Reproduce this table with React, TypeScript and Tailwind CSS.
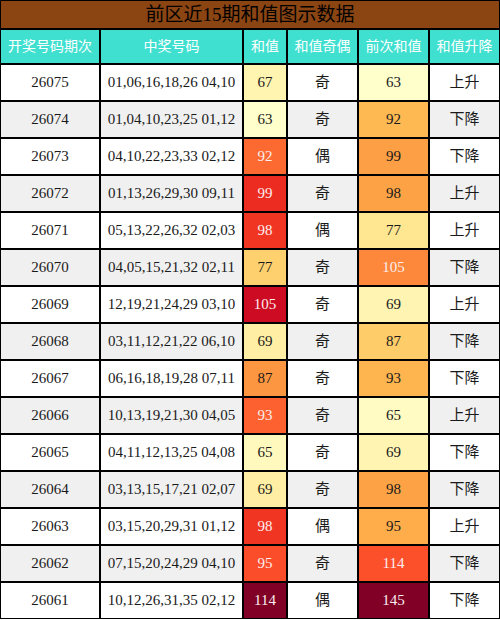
import React from "react";

const rows: [string, string, number, string, number, string][] = [
  ["26075", "01,06,16,18,26 04,10", 67, "奇", 63, "上升"],
  ["26074", "01,04,10,23,25 01,12", 63, "奇", 92, "下降"],
  ["26073", "04,10,22,23,33 02,12", 92, "偶", 99, "下降"],
  ["26072", "01,13,26,29,30 09,11", 99, "奇", 98, "上升"],
  ["26071", "05,13,22,26,32 02,03", 98, "偶", 77, "上升"],
  ["26070", "04,05,15,21,32 02,11", 77, "奇", 105, "下降"],
  ["26069", "12,19,21,24,29 03,10", 105, "奇", 69, "上升"],
  ["26068", "03,11,12,21,22 06,10", 69, "奇", 87, "下降"],
  ["26067", "06,16,18,19,28 07,11", 87, "奇", 93, "下降"],
  ["26066", "10,13,19,21,30 04,05", 93, "奇", 65, "上升"],
  ["26065", "04,11,12,13,25 04,08", 65, "奇", 69, "下降"],
  ["26064", "03,13,15,17,21 02,07", 69, "奇", 98, "下降"],
  ["26063", "03,15,20,29,31 01,12", 98, "偶", 95, "上升"],
  ["26062", "07,15,20,24,29 04,10", 95, "奇", 114, "下降"],
  ["26061", "10,12,26,31,35 02,12", 114, "偶", 145, "下降"],
];

const stops = [
  "#ffffcc",
  "#ffeda0",
  "#fed976",
  "#feb24c",
  "#fd8d3c",
  "#fc4e2a",
  "#e31a1c",
  "#bd0026",
  "#800026",
];

function hex(h: string) {
  return [1, 3, 5].map((i) => parseInt(h.slice(i, i + 2), 16));
}

function ylorrd(t: number) {
  const x = Math.max(0, Math.min(1, t)) * (stops.length - 1);
  const i = Math.min(stops.length - 2, Math.floor(x));
  const f = x - i;
  const a = hex(stops[i]);
  const b = hex(stops[i + 1]);
  const c = a.map((v, k) => Math.round(v + (b[k] - v) * f));
  return `rgb(${c[0]},${c[1]},${c[2]})`;
}

const sums = rows.map((r) => r[2]);
const prevs = rows.map((r) => r[4]);
const sMin = Math.min(...sums);
const sMax = Math.max(...sums);
const pMin = Math.min(...prevs);
const pMax = Math.max(...prevs);

function HeatCell({ v, min, max }: { v: number; min: number; max: number }) {
  const t = (v - min) / (max - min);
  return (
    <div
      className="flex items-center justify-center text-[15px]"
      style={{ backgroundColor: ylorrd(t), color: t > 0.5 ? "#fbeeee" : "#1a1a1a" }}
    >
      {v}
    </div>
  );
}

export default function App() {
  const headers = ["开奖号码期次", "中奖号码", "和值", "和值奇偶", "前次和值", "和值升降"];
  return (
    <div
      className="w-[500px] bg-white text-black"
      style={{ fontFamily: '"Liberation Serif", "Noto Sans CJK SC", serif' }}
    >
      <div className="grid grid-cols-[98px_141px_42px_69px_69px_69px] grid-rows-[27px_33px] auto-rows-[35px] gap-[2px] bg-black p-[1px]">
        <div className="col-span-6 flex items-center justify-center bg-[#8b4513] text-[19px] leading-none text-black">
          <span className="text-black">前区近15期和值图示数据</span>
        </div>
        {headers.map((h) => (
          <div
            key={h}
            className="flex items-center justify-center bg-[#40e0d0] text-[14px] text-white"
          >
            {h}
          </div>
        ))}
        {rows.map((r, i) => {
          const bg = i % 2 === 1 ? "bg-[#f0f0f0]" : "bg-white";
          return (
            <React.Fragment key={r[0]}>
              <div className={`${bg} flex items-center justify-center text-[15px] text-[#1a1a1a]`}>
                {r[0]}
              </div>
              <div className={`${bg} flex items-center justify-center text-[15px] text-[#1a1a1a]`}>
                {r[1]}
              </div>
              <HeatCell v={r[2]} min={sMin} max={sMax} />
              <div className={`${bg} flex items-center justify-center text-[15px] text-[#1a1a1a]`}>
                {r[3]}
              </div>
              <HeatCell v={r[4]} min={pMin} max={pMax} />
              <div className={`${bg} flex items-center justify-center text-[15px] text-[#1a1a1a]`}>
                {r[5]}
              </div>
            </React.Fragment>
          );
        })}
      </div>
    </div>
  );
}
